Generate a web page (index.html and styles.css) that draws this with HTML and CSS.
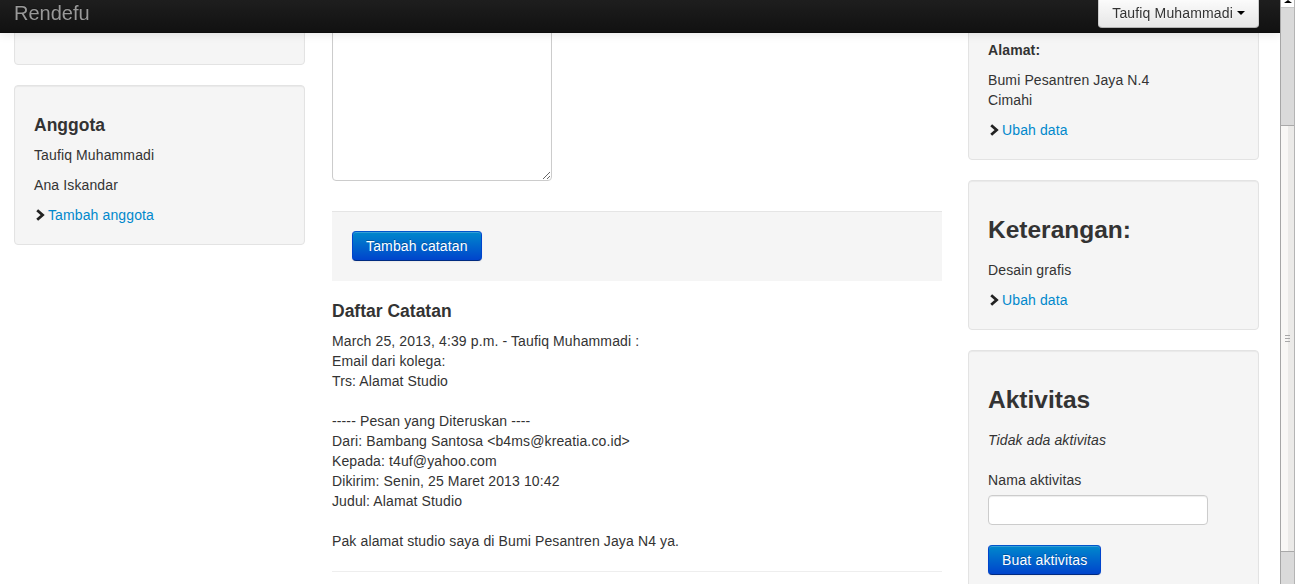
FILE: index.html
```html
<!DOCTYPE html>
<html lang="id">
<head>
<meta charset="utf-8">
<title>Rendefu</title>
<link rel="stylesheet" href="styles.css">
</head>
<body>
<nav class="navbar">
  <div class="navbar-inner">
    <a class="brand" href="#">Rendefu</a>
    <button class="btn user-btn" type="button">Taufiq Muhammadi <span class="caret"></span></button>
  </div>
</nav>

<div class="page">
  <aside class="col-side">
    <div class="well well-cut"></div>
    <div class="well">
      <h4>Anggota</h4>
      <p>Taufiq Muhammadi</p>
      <p>Ana Iskandar</p>
      <a class="more" href="#"><svg class="icon" viewBox="0 0 14 14" width="14" height="14"><path d="M3.2 2.2 L8.6 7 L3.2 11.8" fill="none" stroke="#222" stroke-width="2.8" stroke-linejoin="miter"/></svg>Tambah anggota</a>
    </div>
  </aside>

  <main class="col-main">
    <form class="note-form">
      <textarea class="note-input"></textarea>
      <div class="form-actions">
        <button class="btn btn-primary" type="button">Tambah catatan</button>
      </div>
    </form>
    <h4>Daftar Catatan</h4>
    <p>March 25, 2013, 4:39 p.m. - Taufiq Muhammadi :<br>
Email dari kolega:<br>
Trs: Alamat Studio<br>
<br>
----- Pesan yang Diteruskan ----<br>
Dari: Bambang Santosa &lt;b4ms@kreatia.co.id&gt;<br>
Kepada: t4uf@yahoo.com<br>
Dikirim: Senin, 25 Maret 2013 10:42<br>
Judul: Alamat Studio<br>
<br>
Pak alamat studio saya di Bumi Pesantren Jaya N4 ya.</p>
    <hr>
  </main>

  <aside class="col-side">
    <div class="well well-address">
      <p><strong>Alamat:</strong></p>
      <p>Bumi Pesantren Jaya N.4<br>Cimahi</p>
      <a class="more" href="#"><svg class="icon" viewBox="0 0 14 14" width="14" height="14"><path d="M3.2 2.2 L8.6 7 L3.2 11.8" fill="none" stroke="#222" stroke-width="2.8" stroke-linejoin="miter"/></svg>Ubah data</a>
    </div>
    <div class="well">
      <h3>Keterangan:</h3>
      <p>Desain grafis</p>
      <a class="more" href="#"><svg class="icon" viewBox="0 0 14 14" width="14" height="14"><path d="M3.2 2.2 L8.6 7 L3.2 11.8" fill="none" stroke="#222" stroke-width="2.8" stroke-linejoin="miter"/></svg>Ubah data</a>
    </div>
    <div class="well">
      <h3>Aktivitas</h3>
      <p><em>Tidak ada aktivitas</em></p>
      <form class="activity-form">
        <label for="nama">Nama aktivitas</label>
        <input id="nama" type="text">
        <button class="btn btn-primary" type="button">Buat aktivitas</button>
      </form>
    </div>
  </aside>
</div>

<div class="scrollbar" aria-hidden="true">
  <div class="sb-arrow"><span class="sb-tri"></span></div>
  <div class="sb-track sb-track-top"></div>
  <div class="sb-thumb"><span class="sb-grip"></span></div>
  <div class="sb-track sb-track-bottom"></div>
</div>
</body>
</html>
```

FILE: styles.css
```css
html, body {
  margin: 0;
  padding: 0;
  height: 100%;
  overflow: hidden;
}

body {
  font-family: "Liberation Sans", Arial, Helvetica, sans-serif;
  font-size: 14px;
  line-height: 20px;
  letter-spacing: 0.12px;
  color: #333;
  background: #fff;
}

/* navbar */
.navbar {
  position: fixed;
  top: 0;
  left: 0;
  width: 1280px;
  z-index: 10;
}

.navbar-inner {
  height: 33px;
  box-sizing: border-box;
  padding: 0 21px 0 14px;
  display: flex;
  justify-content: space-between;
  align-items: flex-start;
  background: linear-gradient(#1e1e1e, #111);
  border-bottom: 1px solid #0d0d0d;
  box-shadow: 0 1px 10px rgba(0, 0, 0, 0.1);
}

.brand {
  display: block;
  padding-top: 3px;
  font-size: 20px;
  line-height: 20px;
  letter-spacing: 0;
  color: #999;
  text-decoration: none;
  text-shadow: 0 -1px 0 rgba(0, 0, 0, 0.25);
}

.btn {
  font-family: "Liberation Sans", Arial, Helvetica, sans-serif;
  font-size: 14px;
  line-height: 20px;
  letter-spacing: 0.15px;
  padding: 4px 13px;
  border-radius: 4px;
  cursor: pointer;
  margin: 0;
}

.user-btn {
  height: 28px;
  box-sizing: border-box;
  padding: 3px 13px 4px;
  color: #333;
  text-shadow: 0 1px 1px rgba(255, 255, 255, 0.75);
  background: linear-gradient(#fbfbfb, #e6e6e6);
  border: 1px solid #ccc;
  border-top: 0;
  border-bottom-color: #b3b3b3;
  border-radius: 0 0 4px 4px;
  box-shadow: inset 0 1px 0 rgba(255, 255, 255, 0.2), 0 1px 2px rgba(0, 0, 0, 0.05);
}

.caret {
  display: inline-block;
  width: 0;
  height: 0;
  vertical-align: top;
  margin-top: 8px;
  border-top: 4px solid #000;
  border-left: 4px solid transparent;
  border-right: 4px solid transparent;
}

.btn-primary {
  color: #fff;
  text-shadow: 0 -1px 0 rgba(0, 0, 0, 0.25);
  background: linear-gradient(#0088cc, #0044cc);
  border: 1px solid #0044cc;
  border-color: #0055cc #0044cc #002a80;
  box-shadow: inset 0 1px 0 rgba(255, 255, 255, 0.2), 0 1px 2px rgba(0, 0, 0, 0.05);
}

/* layout */
.page {
  display: flex;
  align-items: flex-start;
  padding-left: 14px;
}

.col-side {
  width: 291px;
  flex: none;
}

.col-main {
  width: 610px;
  flex: none;
  margin: 0 26px 0 27px;
}

.well {
  background: #f5f5f5;
  border: 1px solid #e3e3e3;
  border-radius: 4px;
  padding: 19px;
  margin-bottom: 20px;
  box-shadow: inset 0 1px 1px rgba(0, 0, 0, 0.05);
}

.well-cut {
  height: 65px;
  box-sizing: border-box;
}

.well-address {
  padding-top: 39px;
}

h4 {
  margin: 10px 0;
  font-size: 17.5px;
  line-height: 20px;
  font-weight: bold;
  letter-spacing: 0;
  color: #333;
}

h3 {
  margin: 10px 0;
  font-size: 24.5px;
  line-height: 40px;
  font-weight: bold;
  letter-spacing: 0;
  color: #333;
}

p {
  margin: 0 0 10px;
}

.more {
  display: block;
  color: #0088cc;
  text-decoration: none;
}

.icon {
  display: inline-block;
  width: 14px;
  height: 14px;
  vertical-align: text-top;
  margin-top: 1px;
}

/* note form */
.note-form {
  margin: 0;
}

.note-input {
  display: block;
  width: 220px;
  height: 181px;
  box-sizing: border-box;
  margin: 0;
  padding: 4px 6px;
  border: 1px solid #ccc;
  border-radius: 4px;
  box-shadow: inset 0 1px 1px rgba(0, 0, 0, 0.075);
  font-family: inherit;
  font-size: 14px;
}

.form-actions {
  background: #f5f5f5;
  border-top: 1px solid #e5e5e5;
  padding: 19px 20px 20px;
  margin: 30px 0 20px;
}

hr {
  margin: 20px 0;
  border: 0;
  border-top: 1px solid #eee;
  border-bottom: 1px solid #fff;
}

/* activity form */
.activity-form {
  margin: 20px 0 0;
}

.activity-form label {
  display: block;
  margin-bottom: 5px;
}

.activity-form input {
  display: block;
  width: 220px;
  height: 30px;
  box-sizing: border-box;
  margin: 0 0 20px;
  padding: 4px 6px;
  border: 1px solid #ccc;
  border-radius: 4px;
  background: #fff;
  box-shadow: inset 0 1px 1px rgba(0, 0, 0, 0.075);
  font-family: inherit;
  font-size: 14px;
}

/* fake window scrollbar */
.scrollbar {
  position: fixed;
  top: 0;
  right: 0;
  width: 15px;
  height: 100%;
  display: flex;
  flex-direction: column;
  box-sizing: border-box;
  border-left: 1px solid #a6a6a6;
  border-right: 1px solid #b4b4b4;
  background: #dcdcdc;
  z-index: 20;
}

.sb-arrow {
  height: 7px;
  background: #fff;
  border-bottom: 1px solid #c8c8c8;
  display: flex;
  justify-content: center;
}

.sb-tri {
  width: 0;
  height: 0;
  border-left: 4px solid transparent;
  border-right: 4px solid transparent;
  border-bottom: 3px solid #000;
}

.sb-track-top {
  height: 117px;
  background: #dadada;
}

.sb-thumb {
  height: 427px;
  box-sizing: border-box;
  border-top: 1px solid #a9a9a9;
  border-bottom: 1px solid #a9a9a9;
  background: linear-gradient(to right, #f8f7f5 0%, #f8f7f5 55%, #ebeae8 56%, #ebeae8 100%);
  display: flex;
  align-items: center;
  justify-content: center;
}

.sb-grip {
  width: 5px;
  height: 5px;
  border-top: 1px solid #a8a8a8;
  border-bottom: 1px solid #a8a8a8;
  background: linear-gradient(transparent 2px, #a8a8a8 2px, #a8a8a8 3px, transparent 3px);
}

.sb-track-bottom {
  flex: 1;
  background: #dadada;
}
```
